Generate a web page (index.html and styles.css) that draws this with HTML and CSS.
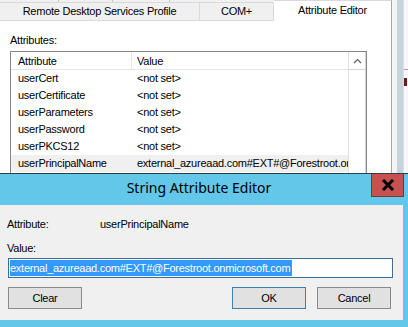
FILE: index.html
```html
<!DOCTYPE html>
<html lang="en">
<head>
  <meta charset="UTF-8" />
  <title>Attribute Editor</title>
  <link rel="stylesheet" href="styles.css">
</head>
<body>

  <div class="sheet">
    <div class="tabrow">
      <div class="tabgroup">
        <div class="upper">
          <span style="width:59px"></span>
          <span style="width:54px"></span>
          <span style="width:57px"></span>
        </div>
        <div class="tabs">
          <div class="tab tab-rds">Remote Desktop Services Profile</div>
          <div class="tab tab-com">COM+</div>
        </div>
      </div>
      <div class="tab-active">Attribute Editor</div>
    </div>

    <div class="panel">
      <div class="label">Attributes:</div>
      <div class="listbox">
        <div class="list">
          <div class="row head">
            <div class="cell c1">Attribute</div>
            <div class="cell c2">Value</div>
          </div>
          <div class="row"><div class="cell c1">userCert</div><div class="cell c2">&lt;not set&gt;</div></div>
          <div class="row"><div class="cell c1">userCertificate</div><div class="cell c2">&lt;not set&gt;</div></div>
          <div class="row"><div class="cell c1">userParameters</div><div class="cell c2">&lt;not set&gt;</div></div>
          <div class="row"><div class="cell c1">userPassword</div><div class="cell c2">&lt;not set&gt;</div></div>
          <div class="row"><div class="cell c1">userPKCS12</div><div class="cell c2">&lt;not set&gt;</div></div>
          <div class="row selected"><div class="cell c1">userPrincipalName</div><div class="cell c2">external_azureaad.com#EXT#@Forestroot.onmicrosoft.com</div></div>
        </div>
        <div class="scrollbar">
          <div class="scroll-up">
            <svg width="9" height="6" viewBox="0 0 9 6"><polyline points="1,5 4.5,1.5 8,5" fill="none" stroke="#606060" stroke-width="1.2"/></svg>
          </div>
        </div>
      </div>
    </div>
  </div>

  <div class="edge">
    <div class="edge-gap"></div>
    <div class="edge-blue"></div>
    <div class="edge-win">
      <div class="edge-top"></div>
      <div class="edge-mark"></div>
    </div>
  </div>

  <div class="dialog">
    <div class="titlebar">
      <div class="title">String Attribute Editor</div>
      <div class="close">
        <svg width="14" height="12" viewBox="0 0 14 12"><path d="M2 1 L12 11 M12 1 L2 11" stroke="#000" stroke-width="3"/></svg>
      </div>
    </div>
    <div class="dlg-body">
      <div class="field">
        <span class="field-name">Attribute:</span>
        <span>userPrincipalName</span>
      </div>
      <div class="value-label">Value:</div>
      <div class="textbox"><span class="sel">external_azureaad.com#EXT#@Forestroot.onmicrosoft.com</span></div>
      <div class="buttons">
        <button class="btn">Clear</button>
        <div class="spacer"></div>
        <button class="btn btn-default">OK</button>
        <button class="btn">Cancel</button>
      </div>
    </div>
  </div>

</body>
</html>
```

FILE: styles.css
```css
* { box-sizing: border-box; }

body {
  margin: 0;
  width: 408px;
  height: 327px;
  overflow: hidden;
  position: relative;
  display: flex;
  background: #fff;
  font-family: "Liberation Sans", Arial, sans-serif;
  font-size: 11px;
  letter-spacing: -0.25px;
  color: #000;
}

/* property sheet behind the dialog */
.sheet {
  width: 392px;
  display: flex;
  flex-direction: column;
}

.tabrow {
  height: 21px;
  display: flex;
  align-items: flex-end;
}

.tabgroup {
  display: flex;
  flex-direction: column;
}

.upper {
  height: 2px;
  display: flex;
  background: #f0f0f0;
}

.upper span {
  border-right: 1px solid #c8c8c8;
}

.tabs {
  display: flex;
  height: 19px;
}

.tab {
  background: #f0f0f0;
  border-top: 1px solid #d9d9d9;
  border-right: 1px solid #d9d9d9;
  border-bottom: 1px solid #d9d9d9;
  text-align: center;
  line-height: 17px;
}

.tab-rds { width: 200px; }
.tab-com { width: 74px; }

.tab-active {
  width: 118px;
  height: 21px;
  background: #fff;
  border-top: 1px solid #d9d9d9;
  border-right: 1px solid #a8a8a8;
  text-align: center;
  line-height: 18px;
}

.panel {
  flex: 1;
  min-height: 0;
  background: #fff;
  border-right: 1px solid #a8a8a8;
  padding: 12px 0 0 10px;
  display: flex;
  flex-direction: column;
}

.label {
  height: 14px;
  line-height: 14px;
  margin-bottom: 4px;
}

.listbox {
  flex: 1;
  min-height: 0;
  width: 357px;
  border: 1px solid #828790;
  border-bottom: none;
  display: flex;
}

.list {
  flex: 1;
  overflow: hidden;
}

.row {
  display: flex;
  height: 17px;
  line-height: 17px;
  white-space: nowrap;
}

.row.head {
  height: 18px;
  line-height: 19px;
  border-bottom: 1px solid #e5e5e5;
}

.row.selected {
  background: #f0f0f0;
}

.cell {
  overflow: hidden;
}

.c1 {
  width: 121px;
  padding-left: 7px;
}

.c2 {
  flex: 1;
  padding-left: 5px;
}

.head .c1 {
  border-right: 1px solid #e5e5e5;
}

.scrollbar {
  width: 18px;
  border-left: 1px solid #e0e0e0;
  border-right: 1px solid #d4d4d4;
}

.scroll-up {
  height: 18px;
  border-bottom: 1px solid #d4d4d4;
  display: flex;
  align-items: center;
  justify-content: center;
}

/* edge of the window behind */
.edge {
  display: flex;
  flex: 1;
}

.edge-gap {
  width: 5px;
  background: #f4f4f4;
}

.edge-blue {
  width: 6px;
  background: #c3d4dc;
}

.edge-win {
  flex: 1;
  background: #f7f7f7;
  border-left: 1px solid #d8e0e4;
}

.edge-top {
  height: 70px;
  border-bottom: 1px solid #a0a0a0;
}

.edge-mark {
  width: 3px;
  height: 8px;
  margin-top: 8px;
  background: #6b1a1a;
}

/* string attribute editor dialog */
.dialog {
  position: absolute;
  left: 0;
  top: 173px;
  width: 408px;
  height: 154px;
  background: #63c7e9;
  border-top: 1px solid #2c3e48;
  display: flex;
  flex-direction: column;
}

.titlebar {
  height: 31px;
  display: flex;
  align-items: flex-start;
}

.title {
  flex: 1;
  padding-left: 27px;
  text-align: center;
  font-family: "Noto Sans", "Open Sans", sans-serif;
  font-size: 14px;
  letter-spacing: 0;
  line-height: 28px;
}

.close {
  width: 33px;
  height: 23px;
  margin-right: 4px;
  background: #c75050;
  border: 1px solid #7a3535;
  border-top: none;
  display: flex;
  align-items: center;
  justify-content: center;
}

.dlg-body {
  width: 403px;
  height: 115px;
  background: #f0f0f0;
  padding: 12px 10px 0 8px;
}

.field {
  display: flex;
  height: 14px;
  line-height: 14px;
  margin-left: -1px;
}

.field-name {
  width: 93px;
}

.value-label {
  margin-top: 10px;
  margin-left: -1px;
  height: 14px;
  line-height: 14px;
}

.textbox {
  margin-top: 3px;
  height: 20px;
  background: #fff;
  border: 1px solid #3c6e9c;
  padding: 1px 0 0 1px;
  white-space: nowrap;
  overflow: hidden;
}

.sel {
  display: inline-block;
  background: #3399ff;
  color: #fff;
  line-height: 16px;
  padding-right: 2px;
}

.buttons {
  display: flex;
  margin-top: 9px;
  margin-right: 2px;
}

.spacer { flex: 1; }

.btn {
  width: 74px;
  height: 22px;
  background: #e1e1e1;
  border: 1px solid #8a8a8a;
  font-family: "Liberation Sans", Arial, sans-serif;
  font-size: 11px;
  letter-spacing: -0.25px;
  color: #000;
  padding: 0;
}

.btn-default {
  border-color: #3c7fb1;
  margin-right: 11px;
}
```
